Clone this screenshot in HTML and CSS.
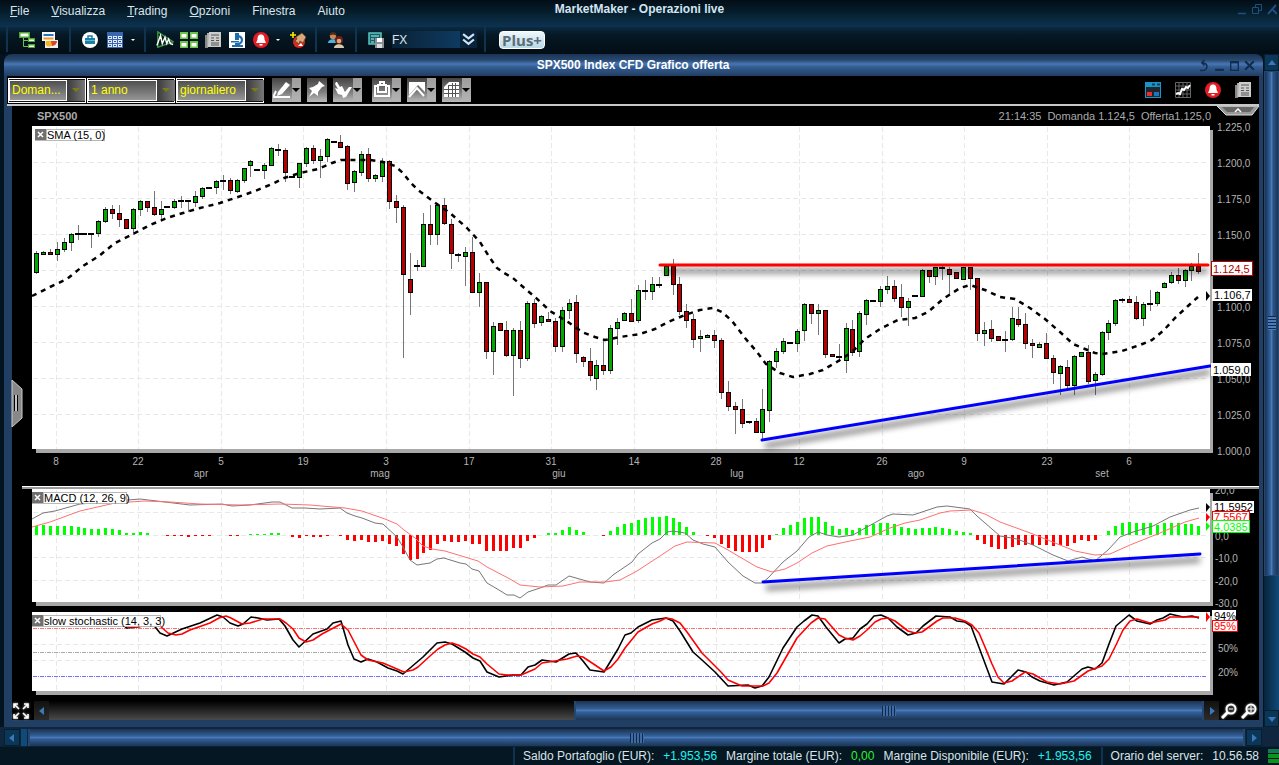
FILE: index.html
```html
<!DOCTYPE html>
<html lang="it">
<head>
<meta charset="utf-8">
<title>MarketMaker - Operazioni live</title>
<link rel="stylesheet" href="styles.css">
</head>
<body>
<header class="menubar">
  <nav class="menu">
    <a href="#"><u>F</u>ile</a><a href="#"><u>V</u>isualizza</a><a href="#"><u>T</u>rading</a><a href="#"><u>O</u>pzioni</a><a href="#">Finestra</a><a href="#">Aiuto</a>
  </nav>
  <h1 class="app-title">MarketMaker - Operazioni live</h1>
  <div class="app-controls">
    <button aria-label="Riduci"><svg width="10" height="14"><path d="M1 11.500h8" stroke="#1f4f80" stroke-width="1.500"/></svg></button>
    <button aria-label="Ripristina"><svg width="10" height="14" fill="none" stroke="#1f4f80"><path d="M3.500 5.500v-3h6v6h-3M.500 5.500h6v6h-6z"/></svg></button>
    <button aria-label="Chiudi"><svg width="10" height="14" stroke="#1f4f80" stroke-width="2"><path d="M1 12l8-9M6 8l4 4"/></svg></button>
  </div>
</header>

<div class="toolbar">
  <div class="group tight">
    <button aria-label="Albero"><svg viewBox="0 0 16 16"><path d="M4.500 6v8.500h5M4.500 8.500h5" fill="none" stroke="#6cc24a"/><path d="M0 0h11v6H0zM9 6h7v4H9zM9 12h7v4H9z" fill="#4da52f"/><path d="M1.500 1.500h8v3h-8zM10 7.500h5v1.500h-5zM10 13.500h5v1.500h-5z" fill="#fff"/></svg></button>
    <button aria-label="Prodotti"><svg viewBox="0 0 16 16"><path d="M3 8h13v8H3z" fill="#eee"/><circle cx="7" cy="11" r="3.500" fill="#f4b32a"/><path d="M9 9h6a5 5 0 0 1-5 5z" fill="#d9452b"/><path d="M0 0h13v9H0z" fill="#f4f7fb"/><path d="M1.500 2h10v2h-10z" fill="#2f6fc0"/><path d="M1.500 5.500h10v2h-10z" fill="#f29b20"/></svg></button>
  </div>
  <div class="group">
    <button aria-label="Conto"><svg viewBox="0 0 16 16"><circle cx="8" cy="8" r="8" fill="#fff"/><path d="M6 6V4h4v2" fill="none" stroke="#1b7fa8" stroke-width="1.500"/><path d="M3 6h10v6H3z" fill="#1b7fa8"/><path d="M3 8h10v1H3z" fill="#5fb7d5"/></svg></button>
    <button aria-label="Tabella"><svg viewBox="0 0 16 16"><path d="M0 0h16v16H0z" fill="#3a66b0"/><path d="M1 4h4v3H1zM6 4h4v3H6zM11 4h4v3h-4zM1 8h4v3H1zM6 8h4v3H6zM11 8h4v3h-4zM1 12h4v3H1zM6 12h4v3H6zM11 12h4v3h-4z" fill="#dde8f8"/><path d="M2 5.500h2M7 5.500h2M12 5.500h2M2 9.500h2M7 9.500h2M12 9.500h2M2 13.500h2M7 13.500h2M12 13.500h2" stroke="#2b4f90"/></svg></button>
    <button class="caret" aria-label="Altre tabelle"></button>
  </div>
  <div class="group charts">
    <button aria-label="Grafico"><svg class="big" viewBox="0 0 20 18"><path d="M2 0v17L19 11z" fill="#0a1d18" stroke="#3a9a45" stroke-width="1.500"/><path d="M1 15L5 4l2 9 3-7 2 7 2-5 2 5 3 1" fill="none" stroke="#fff" stroke-width="1.600"/></svg></button>
    <button aria-label="Riquadri"><svg class="wide" viewBox="0 0 18 16"><path d="M0 0h8v7H0zM10 0h8v7h-8zM0 9h8v7H0zM10 9h8v7h-8z" fill="#6cc24a"/><path d="M1.500 2h5v3.500h-5zM11.500 2h5v3.500h-5zM1.500 11h5v3.500h-5zM11.500 11h5v3.500h-5z" fill="#fff"/></svg></button>
    <button aria-label="Notizie"><svg viewBox="0 0 16 16"><use href="#news"/></svg></button>
    <button aria-label="Analisi"><svg viewBox="0 0 16 16"><path d="M0 0h16v16H0z" fill="#fff"/><path d="M6 1h4v7H6zM3 13h11v2H3zM2 9h8v1.500H2z" fill="#1e6da8"/><path d="M10 4c4 2 4 6 0 8H6" fill="none" stroke="#1e6da8" stroke-width="2"/></svg></button>
    <button aria-label="Avvisi"><svg viewBox="0 0 16 16"><use href="#bell"/></svg></button>
    <button class="caret" aria-label="Altri avvisi"></button>
    <button class="new-alert" aria-label="Nuovo avviso"><svg viewBox="0 0 16 16"><circle cx="9" cy="10" r="6" fill="#d42a22"/><path d="M6 5l6-4 4 4-3 6-3-2-1 3-4-3 2-2z" fill="#d8a878" stroke="#704020" stroke-width=".8"/><path d="M8 14l3-3 2 3z" fill="#fff"/><path d="M3 0v6M0 3h6" stroke="#ffe600" stroke-width="1.600"/></svg></button>
  </div>
  <div class="group">
    <button aria-label="Utenti"><svg viewBox="0 0 16 16"><circle cx="5" cy="4" r="3.200" fill="#c98a58"/><path d="M1.500 3.500a3.500 3.500 0 0 1 7 0L5 2.500z" fill="#4a2a18"/><path d="M0 11c0-5 10-5 10 0z" fill="#4db2df"/><circle cx="11" cy="8" r="4" fill="#6a2018"/><circle cx="11" cy="9" r="2.300" fill="#e2a878"/><path d="M6 16c0-5 10-5 10 0z" fill="#d8c8b0"/></svg></button>
  </div>
  <div class="group">
    <button aria-label="Salva layout"><svg viewBox="0 0 16 16"><path d="M1 1h12v11H1z" fill="#17606a" stroke="#58c8c0" stroke-width="1.500"/><path d="M3 4h8M3 7h3M3 10h3" stroke="#bdf0e8"/><path d="M7 6h9v10H7z" fill="#8a8f98"/><path d="M9 6h5v4H9z" fill="#fff"/><path d="M9 12h5v4H9z" fill="#ddd"/></svg></button>
    <label class="layout-select"><select aria-label="Layout"><option>FX</option></select><svg viewBox="0 0 12 12"><path d="M1 1l5 4 5-4M1 6l5 4 5-4" fill="none" stroke="#cfe4f5" stroke-width="2"/></svg></label>
  </div>
  <div class="group"><button class="plus">Plus+</button></div>
</div>

<main class="workspace">
  <section class="window">
    <div class="titlebar">
      <h2>SPX500 Index CFD Grafico offerta</h2>
      <div class="win-controls">
        <button aria-label="Sgancia"><svg viewBox="0 0 10 12"><path d="M1 10.500c8 1 8-7 2-7M5 1L2.500 3.500 5 6" stroke-width="1.400"/></svg></button>
        <button aria-label="Riduci"><svg viewBox="0 0 10 12"><path d="M1 10h8"/></svg></button>
        <button aria-label="Ingrandisci"><svg viewBox="0 0 10 12"><path d="M1.500 2.500h7v8h-7z" stroke-width="1.200"/><path d="M1 3h8"/></svg></button>
        <button aria-label="Chiudi"><svg viewBox="0 0 10 12"><path d="M1 2l8 8M9 2l-8 8"/></svg></button>
      </div>
    </div>

    <div class="chart-tools">
      <div class="selects">
        <label class="combo"><select aria-label="Prezzo"><option>Doman...</option></select><i></i></label>
        <label class="combo wide"><select aria-label="Periodo"><option>1 anno</option></select><i></i></label>
        <label class="combo wide"><select aria-label="Intervallo"><option>giornaliero</option></select><i></i></label>
      </div>
      <div class="draw-tools">
        <button class="tool drop" aria-label="Disegna"><svg viewBox="0 0 20 24"><path d="M14 4l4 3-8 9-5 2 1-4z" fill="#fff"/><path d="M4 13l-2 4v2h16" fill="none" stroke="#fff" stroke-width="1.800"/></svg></button>
        <button class="tool" aria-label="Fissa"><svg viewBox="0 0 20 24"><path d="M12 3l6 5-3 1-4 5v4l-4-3-5 4 3-6-3-3 4-1 5-3z" fill="#fff"/></svg></button>
        <button class="tool drop" aria-label="Seleziona"><svg viewBox="0 0 20 24"><path d="M2 6l3 5-3-1 3 6 4 1 2-5-2-4-2 1-3-5-1 0z" fill="#fff"/><path d="M8 13l2 7 3-1 6-10-3 0-4 5-2-3z" fill="#fff"/></svg></button>
        <button class="tool drop lone" aria-label="Esporta"><svg viewBox="0 0 20 24" fill="none" stroke="#fff" stroke-width="2"><path d="M6 8H3v10h14V8h-3M6 7v7h8V7zM8 7V4h4v3"/></svg></button>
        <button class="tool drop" aria-label="Indicatori"><svg viewBox="0 0 20 24"><path d="M2 4h16v10l-7-7-9 10z" fill="#fff"/><path d="M2 19l8-9 7 8" fill="none" stroke="#fff" stroke-width="2"/></svg></button>
        <button class="tool drop" aria-label="Griglia"><svg viewBox="0 0 20 24"><path d="M7 4h10v15H2V9z" fill="#fff"/><path d="M2 11.500h15M2 15.500h15M6.500 8v11M10.500 5v14M13.500 5v14M6 7.500h11" stroke="#555"/></svg></button>
      </div>
      <div class="view-tools">
        <button aria-label="Ordine"><svg viewBox="0 0 16 16"><path d="M0 0h16v16H0z" fill="#1696c8"/><path d="M1 5h14v10H1z" fill="#20242c"/><path d="M2 10h5v4H2z" fill="#e63030"/><path d="M9 10h5v4H9z" fill="#1b78b8"/><path d="M7 2.500h3M12 2.500h3" stroke="#0b3c58" stroke-width="2"/></svg></button>
        <button aria-label="Vista grafico"><svg viewBox="0 0 16 16"><path d="M.500 .500h15v15H.500zM4 0v16M8 0v16M12 0v16M0 4h16M0 8h16M0 12h16" fill="none" stroke="#666"/><path d="M1 12l2-1 2 1 2-5 2 1 2-3 2 1 2-3" fill="none" stroke="#fff" stroke-width="2"/></svg></button>
        <button aria-label="Avviso"><svg viewBox="0 0 16 16"><use href="#bell"/></svg></button>
        <button aria-label="Notizie"><svg viewBox="0 0 16 16"><use href="#news"/></svg></button>
      </div>
    </div>

    <div class="chart-body">
      <div class="quote">
        <h3>SPX500</h3>
        <p><span>21:14:35</span><span>Domanda 1.124,5</span><span>Offerta1.125,0</span></p>
        <button class="fold" aria-label="Comprimi"><svg viewBox="0 0 42 10"><path d="M0 0h42l-7 9H9z" fill="#999" stroke="#ddd"/><path d="M5 1h32l-4 5H10z" fill="#666"/><path d="M18 6l3-3 3 3" fill="none" stroke="#fff" stroke-width="1.500"/></svg></button>
      </div>
      <svg id="price" class="chart" viewBox="12 126 1247 360" role="img" aria-label="Grafico SPX500"></svg>
      <svg id="macd" class="chart" viewBox="12 486 1247 121" role="img" aria-label="MACD"></svg>
      <svg id="stoch" class="chart" viewBox="12 607 1247 94" role="img" aria-label="Stocastico lento"></svg>
      <div class="range">
        <button class="glyph" aria-label="Adatta"><svg viewBox="0 0 16 16"><path d="M1 5V1h4M11 1h4v4M15 11v4h-4M5 15H1v-4M1 1l5 5M15 1l-5 5M15 15l-5-5M1 15l5-5" fill="none" stroke="#fff" stroke-width="1.600"/></svg></button>
        <button class="step" aria-label="Indietro"><svg viewBox="0 0 8 8"><path d="M6 0v8L1 4z"/></svg></button>
        <div class="past"></div>
        <div class="thumb"><span class="grip"></span></div>
        <button class="step" aria-label="Avanti"><svg viewBox="0 0 8 8"><path d="M2 0v8l5-4z"/></svg></button>
        <button class="glyph" aria-label="Riduci zoom"><svg viewBox="0 0 16 16" fill="none" stroke="#fff"><path d="M1 15l6-6" stroke-width="3"/><circle cx="10" cy="6" r="4.500" stroke-width="2"/><path d="M8 6h4"/></svg></button>
        <button class="glyph" aria-label="Aumenta zoom"><svg viewBox="0 0 16 16" fill="none" stroke="#fff"><path d="M1 15l6-6" stroke-width="3"/><circle cx="10" cy="6" r="4.500" stroke-width="2"/><path d="M7 6h6M10 3v6"/></svg></button>
      </div>
    </div>
  </section>

  <div class="vscroll">
    <button aria-label="Su"><svg viewBox="0 0 8 8"><path d="M0 6h8L4 1z"/></svg></button>
    <div class="vthumb"><span class="grip"></span></div>
    <div class="vtrack"></div>
    <button aria-label="Giù"><svg viewBox="0 0 8 8"><path d="M0 2h8L4 7z"/></svg></button>
  </div>
</main>

<div class="hscroll">
  <button aria-label="Sinistra"><svg viewBox="0 0 8 8"><path d="M6 0v8L1 4z"/></svg></button>
  <div class="htrack"></div>
  <div class="thumb"><span class="grip"></span></div>
  <button aria-label="Destra"><svg viewBox="0 0 8 8"><path d="M2 0v8l5-4z"/></svg></button>
</div>

<footer class="status">
  <p><span>Saldo Portafoglio (EUR):</span><b class="cyan">+1.953,56</b><span>Margine totale (EUR):</span><b class="green">0,00</b><span>Margine Disponibile (EUR):</span><b class="cyan">+1.953,56</b></p>
  <p><span>Orario del server:</span><span>10.56.58</span></p>
  <div class="signal"><i></i><i></i><i></i></div>
</footer>

<svg class="defs" aria-hidden="true">
  <defs>
    <g id="bell"><circle cx="8" cy="8" r="8" fill="#e31b23"/><path d="M8 2.500c3 0 3.500 2.500 3.500 5L13 11H3l1.500-3.500c0-2.500.5-5 3.500-5zM6.500 12h3v1.500h-3z" fill="#fff"/></g>
    <g id="news"><path d="M0 3h3v13H0z" fill="#888"/><path d="M2 1h3v14H2z" fill="#aaa"/><path d="M4 0h12v15H3z" fill="#ccc"/><path d="M6 3h8M6 6h3M6 8.500h3M6 11h8M11 6h3M11 8.500h3M6 13h8" stroke="#555"/></g>
  </defs>
</svg>
<script src="charts.js"></script>
</body>
</html>
```
FILE: styles.css
```css
* { box-sizing: border-box; }
body {
  margin: 0; min-height: 100vh; display: flex; flex-direction: column;
  background: #03131f; color: #dce3e8;
  font: 12px/16px "Liberation Sans", Arial, sans-serif;
}
h1, h2, h3, p { margin: 0; font-size: 12px; }
a { color: inherit; text-decoration: none; }
button, select { font: inherit; color: inherit; border: 0; padding: 0; margin: 0; background: none; appearance: none; }
button { display: flex; align-items: center; justify-content: center; }
.defs { position: absolute; width: 0; height: 0; }

.menubar {
  height: 27px; display: grid; grid-template-columns: 1fr auto 1fr;
  background: linear-gradient(#020d16, #06202f 50%, #0d3352);
}
.menu { display: flex; gap: 22px; padding: 3px 0 0 10px; }
.app-title { padding-top: 1px; color: #d3e4f2; }
.app-controls { display: flex; justify-content: flex-end; align-items: flex-start; gap: 5px; padding: 2px 2px 0 0; }

.toolbar {
  height: 27px; padding-left: 6px; display: grid;
  grid-template-columns: 63px 75px 171px 40px 129px auto;
  background: linear-gradient(#0a2a42, #051824 30%, #020d15);
}
.group { display: flex; align-items: center; gap: 7px; padding-left: 10px; border-left: 2px solid #0f3350; height: 25px; }
.tight { gap: 5px; }
.charts { gap: 6px; }
.group button { width: 18px; height: 18px; }
.group button svg { width: 16px; height: 16px; }
.group button .wide { width: 18px; }
.group button .big { width: 20px; height: 18px; }
.group .caret { width: 4px; }
.group .new-alert { margin-left: 3px; }
.caret::before { content: ""; border: 2px solid transparent; border-top-color: #fff; border-bottom: 0; }
.layout-select { display: flex; align-items: center; height: 17px; }
.layout-select select { width: 68px; height: 17px; background: linear-gradient(90deg, #0a2236, #0e3a60); }
.layout-select svg { width: 17px; height: 17px; padding: 2px; background: #08233b; }
.group .plus {
  width: 46px; height: 18px; margin-left: 3px; border-radius: 4px; border: 1px solid #fff;
  background: linear-gradient(#eef6fa, #b8d8e4); color: #5c6c76;
  font: bold 15px/16px "Open Sans", sans-serif;
}

.workspace { display: grid; grid-template-columns: minmax(0, 1fr) 16px; padding-left: 4px; }
.window {
  padding: 0 4px 7px 3px; border-radius: 8px 8px 0 0;
  background: linear-gradient(#1b3454, #28486f 6px, #4877b4 10px, #335d92 13px, #213e63 22px);
}
.titlebar { height: 22px; display: grid; grid-template-columns: 1fr auto 1fr; align-items: center; color: #fff; }
.titlebar h2 { grid-column: 2; }
.win-controls { display: flex; gap: 4px; justify-content: flex-end; padding-right: 4px; }
.win-controls svg { width: 11px; height: 13px; fill: none; stroke: #122c4c; stroke-width: 2; }

.chart-tools { display: flex; align-items: center; height: 30px; background: #000; border-bottom: 2px solid #c8c8c8; padding: 0 8px 0 1px; }
.selects { display: flex; gap: 1px; }
.combo {
  display: grid; grid-template-columns: 58px 18px; height: 25px; width: 78px;
  border: 1px solid #fff; padding: 1px 0; background: #111;
}
.combo.wide { grid-template-columns: 69px 18px; width: 88px; }
.combo select {
  padding-left: 2px; color: #ff0; border: 1px solid #fff;
  background: linear-gradient(#505050, #959595); border-radius: 0; overflow: hidden;
}
.combo i { background: linear-gradient(90deg, #3a3a3a, #777); display: flex; align-items: center; justify-content: center; }
.combo i::before { content: ""; border: 4px solid transparent; border-top-color: #7c7c10; border-bottom: 0; }
.draw-tools { display: flex; gap: 6px; padding-left: 8px; }
.tool { height: 24px; background: linear-gradient(#444, #808080 60%, #bbb); }
.tool svg { width: 20px; height: 24px; }
.tool.drop { background: linear-gradient(#9c9c9c, #b4b4b4) right / 9px 100% no-repeat, linear-gradient(#444, #808080 60%, #bbb); }
.tool.drop::after { content: ""; margin-right: 1px; border: 4px solid transparent; border-top-color: #000; border-bottom: 0; }
.tool.lone { margin-left: 4px; }
.view-tools { display: flex; gap: 14px; margin-left: auto; }
.view-tools svg { width: 16px; height: 16px; display: block; }

.chart-body { background: #000; margin-left: 5px; }
.quote { position: relative; display: flex; justify-content: space-between; height: 20px; font-size: 11px; line-height: 20px; color: #aaa; padding: 0 48px 0 25px; }
.quote h3 { font-size: 11px; }
.quote p { display: flex; gap: 6px; font-size: 11px; }
.fold { position: absolute; right: 0; top: 0; }
.fold svg { width: 42px; height: 10px; }

.chart { display: block; width: 100%; height: auto; overflow: visible; }
.paper { fill: #fff; }
.shade { fill: #a8a8a8; }
.grid { fill: none; stroke: #e8e8e8; stroke-dasharray: 5 3; shape-rendering: crispEdges; }
.ink { fill: none; shape-rendering: geometricPrecision; stroke-linejoin: round; }
.crisp { shape-rendering: crispEdges; }
.axis { fill: #b4b4b4; font-size: 10px; }
.tag { font-size: 11px; }
.mid { text-anchor: middle; }

.range { display: flex; height: 19px; }
.range .step { width: 15px; background: linear-gradient(#111, #2b2b2b); }
.glyph { width: 20px; }
.glyph svg { width: 16px; height: 16px; filter: drop-shadow(0 0 1px #aaa); }
.range .glyph:first-child { width: 22px; padding-right: 4px; }
.past { flex: 526; background: linear-gradient(#000, #4a4a4a); }
.range .thumb { flex: 627; }
.step svg, .vscroll svg, .hscroll svg { width: 8px; height: 8px; fill: #3a78b8; }
.thumb {
  display: flex; align-items: center; justify-content: center;
  background: linear-gradient(#1a3350, #34609a 42%, #4a7cbc 50%, #335f98 58%, #1b3553);
  border: 1px solid #24466f; border-width: 0 2px;
}
.grip { width: 14px; height: 10px; background: repeating-linear-gradient(90deg, #122a48 0 1px, #3d6aa4 1px 3px); }

.vscroll { display: flex; flex-direction: column; background: #03131f; padding-left: 1px; }
.vscroll button { height: 17px; background: #0b3658; border: 1px solid #06202f; }
.vthumb {
  flex: 506; display: flex; align-items: center; justify-content: center;
  background: linear-gradient(90deg, #1a3350, #34609a 40%, #4a7cbc 50%, #2c5588 62%, #1b3553);
  border: 1px solid #24466f;
}
.vthumb .grip { width: 8px; height: 14px; background: repeating-linear-gradient(#122a48 0 1px, #4a7cbc 1px 3px); }
.vtrack { flex: 135; background: linear-gradient(90deg, #07243b, #0f4a78); }

.hscroll { display: flex; height: 19px; padding: 2px 17px 0 4px; background: #10263f; gap: 1px; }
.hscroll button { width: 16px; background: #0b3658; border: 1px solid #06202f; }
.htrack { width: 6px; background: #0f4a78; }
.hscroll .thumb { flex: 1; }

.status { display: flex; justify-content: flex-end; height: 19px; gap: 3px; border-top: 1px solid #0a2233; background: #051722; }
.status p { display: flex; gap: 9px; padding: 1px 6px 0 8px; border-left: 2px solid #0f3350; }
.status b { font-weight: normal; }
.cyan { color: #1df2f2; }
.green { color: #2df22d; }
.signal { width: 11px; display: flex; flex-direction: column; gap: 1px; padding-top: 2px; }
.signal i { height: 4px; background: #0c9420; }
.signal i:first-child { background: #117a55; }
```
FILE: charts.js
```js
// Candles: colour (g rise, r fall, d flat), body top, body bottom, high, low.
const candles = `g253,273,251,274 g252,255,251,255 r252,255,249,255 g249,255,242,261 g242,250,238,252 g234,243,233,251 d234,234,225,240
d234,234,234,234 d234,234,234,248 g221,234,220,237 g209,222,207,223 r209,214,205,219 r213,220,205,227 r219,229,219,229 g209,229,208,235
g201,210,200,216 r201,208,201,212 r207,215,191,216 g209,215,201,220 d207,207,207,207 g201,208,199,209 d201,201,196,208 d201,201,201,212
g196,203,191,207 g188,197,187,199 d188,188,188,188 g181,188,180,194 d181,181,175,190 r180,191,178,194 g180,192,179,193 g168,181,168,183
g161,166,160,177 d170,170,170,170 g165,171,163,179 g148,166,147,166 d150,150,144,156 r150,173,148,182 d177,177,176,177 g163,178,163,188
g148,164,147,167 r148,161,145,164 g156,161,149,178 g139,157,138,162 d142,142,142,142 r142,148,135,148 r146,184,145,190 g171,183,170,192
g154,173,151,176 r154,179,148,182 g175,179,174,182 g161,177,158,182 r161,202,160,209 r201,208,195,223 r207,275,205,358 r279,293,253,315
d266,266,260,271 g224,267,213,267 r224,235,205,245 g205,235,203,245 r205,224,198,225 r224,254,219,269 d255,255,253,262 g252,257,247,286
r252,293,237,293 g282,293,273,307 r282,352,282,359 g326,352,322,375 r323,331,323,331 r330,356,321,357 g330,356,328,396 r330,359,321,368
g303,359,301,361 r303,324,299,328 g316,323,315,326 r319,322,312,322 r321,347,318,352 g310,347,307,352 g303,311,299,319 r302,354,295,363
r357,362,356,367 r361,376,348,381 g365,379,360,390 r365,371,340,375 g328,371,325,374 g322,329,318,345 g313,321,312,321 r313,322,299,322
g290,321,285,323 d291,291,280,300 g284,292,277,300 d285,285,277,288 g266,276,266,276 r266,285,259,295 r284,312,277,315 r311,321,304,328
r319,340,314,348 g336,339,330,352 g335,338,334,338 r335,341,330,348 r340,393,338,399 r392,407,381,411 r406,410,402,434 r409,424,399,428
d422,422,422,424 r421,433,418,433 g409,433,389,440 g361,411,360,422 g351,362,348,368 g341,352,338,354 d343,343,343,343 g331,344,329,352
g304,331,303,341 r304,314,304,324 g310,314,304,335 r310,355,310,358 r354,357,354,357 d357,357,344,362 g328,361,323,373 r329,353,320,356
g313,352,311,357 g300,315,299,325 d301,301,301,301 g289,302,286,307 g286,290,276,294 r286,299,280,302 r297,308,284,317 g301,308,298,326
d296,296,296,296 g270,297,269,297 r270,277,270,283 g267,277,267,285 d268,268,266,280 r269,275,267,296 r272,279,272,279 g267,280,267,280
r267,279,267,290 r278,334,278,341 g330,334,322,346 r329,339,320,342 r336,341,336,341 d340,340,331,352 g318,340,307,341 r319,325,307,327
r324,344,313,349 r343,346,339,358 g344,348,342,348 r343,359,333,359 r358,373,355,384 g366,374,365,395 r367,386,360,388 g356,386,355,395
g352,357,352,357 r352,382,345,384 g374,381,372,395 g332,375,331,376 g323,333,320,340 g300,324,299,326 d300,300,298,303 r299,303,296,303
r302,319,296,320 g304,319,302,326 d304,304,290,311 g292,304,291,306 g283,288,282,288 g275,283,272,284 r275,281,268,284 g270,281,269,287
g266,271,263,281 r266,272,253,274`.split(/\s+/);

const histogram = [9,10,9,9,9,9,8,7,6,6,7,6,5,2,2,3,2,0,0,-1,-1,-1,-2,-1,-1,-1,0,0,-1,-1,0,1,1,1,2,2,0,-2,-3,-1,-2,-2,-1,0,-1,-5,-6,-5,-7,-7,-6,-9,-11,-19,-25,-24,-18,-15,-9,-6,-7,-7,-6,-9,-9,-16,-16,-16,-16,-13,-13,-6,-3,0,2,2,5,8,5,3,0,0,-1,4,8,11,12,15,17,18,18,19,17,13,8,3,0,-1,-3,-9,-13,-16,-17,-17,-17,-13,-5,1,7,10,13,17,18,18,13,9,6,7,5,7,10,11,12,12,11,8,7,6,7,7,8,7,6,4,3,2,-5,-9,-12,-14,-14,-12,-10,-10,-10,-10,-10,-11,-10,-11,-8,-5,-6,-5,0,4,9,12,13,12,12,12,10,12,12,12,11,11,9];

const sma = "32,296 50,287 67,279 83,266 99,256 115,243 133,234 150,225 167,218 183,213 200,208 220,203 238,197 255,191 272,184 284,178 300,173 318,169 332,163 341,160 370,160 383,162 395,166 403,173 410,182 418,190 434,202 450,213 467,228 480,242 490,258 497,268 504,273 513,278 522,286 535,297 550,311 568,322 582,332 595,337 605,340 620,337 640,334 655,329 668,322 685,315 700,310 713,308 722,312 732,321 745,338 757,352 766,364 780,373 793,377 810,374 823,370 840,360 852,352 865,339 880,329 898,320 915,318 928,312 943,299 960,288 970,285 985,290 1000,297 1015,299 1030,308 1045,319 1060,332 1073,344 1085,349 1095,353 1102,354 1122,351 1140,345 1152,340 1163,331 1175,318 1188,306 1198,297";
const macdLine = "32,519 43,513 55,511 80,504 105,502 140,499 165,502 190,505 222,504 232,506 250,505 272,502 280,502 292,508 305,508 320,509 340,508 347,513 355,516 362,518 375,523 383,524 397,537 403,547 410,560 417,565 430,563 437,559 444,558 460,563 466,564 472,569 479,571 487,583 499,590 507,595 514,595 520,598 528,592 540,588 548,585 556,585 569,576 590,582 604,583 613,575 632,562 638,554 652,543 660,539 667,532 673,531 685,533 693,540 703,544 715,547 728,562 743,576 755,583 762,583 768,578 783,562 797,551 809,537 818,532 827,535 839,537 853,535 867,527 887,516 893,514 913,515 937,507 947,506 970,509 977,516 1000,536 1017,539 1033,545 1053,555 1068,561 1082,557 1095,561 1108,550 1120,537 1133,532 1153,526 1170,517 1190,510 1199,508";
const macdSignal = "32,527 50,522 80,511 115,503 145,501 170,502 200,504 240,505 280,504 310,505 345,508 362,511 385,519 397,524 404,530 415,538 423,546 432,549 445,551 478,561 487,567 510,579 520,585 540,587 563,586 580,582 605,582 620,580 637,571 660,556 675,546 687,542 715,543 728,550 745,560 757,567 772,572 785,569 797,563 812,553 827,546 850,541 870,537 890,528 905,523 920,520 940,513 950,511 972,510 985,514 1000,522 1033,534 1060,545 1075,551 1095,555 1110,554 1130,545 1160,533 1185,522 1199,518";
const slowK = "120,618 123,625 127,628 137,627 152,623 160,633 167,636 182,629 200,623 217,615 223,617 230,623 238,626 243,624 251,617 258,618 267,620 279,619 285,626 293,640 299,647 313,634 327,629 333,623 341,621 348,645 354,659 361,662 368,659 377,662 388,668 397,671 403,674 423,657 437,643 445,642 452,644 465,652 473,658 480,661 487,672 499,677 513,675 521,675 528,667 535,665 542,660 556,662 569,654 576,653 583,661 590,670 604,672 618,649 625,635 631,633 638,627 652,620 666,618 673,621 680,631 693,652 702,660 715,672 728,686 748,685 755,688 762,686 769,677 783,648 797,627 804,621 812,615 818,616 826,627 839,643 845,639 853,638 860,629 867,624 874,616 881,615 888,618 897,627 908,635 916,633 923,626 936,616 950,617 957,621 965,622 971,626 992,682 1004,684 1018,670 1026,672 1032,677 1040,681 1054,685 1067,682 1082,669 1088,667 1095,669 1102,663 1109,644 1116,626 1129,615 1137,621 1150,624 1157,620 1163,618 1170,614 1183,617 1192,616 1199,618";
const slowD = "127,627 139,627 152,623 160,626 168,633 176,635 182,634 190,630 210,623 219,618 226,616 231,618 242,624 250,623 263,619 280,619 286,623 293,629 299,638 306,642 313,640 322,634 341,624 348,630 361,655 368,660 383,663 397,669 404,672 413,670 418,667 430,656 438,649 445,645 452,643 458,645 466,649 473,654 480,657 487,664 499,674 507,675 521,675 535,669 542,663 555,661 567,659 577,656 583,657 604,671 611,667 618,659 625,648 638,632 645,628 652,624 660,621 666,618 672,619 680,623 687,632 702,653 709,660 721,672 728,680 742,686 763,686 769,683 777,673 797,638 811,623 818,618 825,619 839,635 845,638 853,640 860,636 867,630 875,622 881,619 888,618 895,621 908,631 915,633 922,632 929,627 937,621 943,618 955,618 965,621 972,625 979,633 985,647 992,664 998,677 1004,683 1012,681 1025,672 1033,674 1047,682 1060,684 1074,681 1088,671 1102,666 1109,659 1116,645 1123,630 1130,621 1137,619 1150,623 1165,620 1170,617 1192,617 1199,617";

const weeks = [[56, 8], [138, 22], [221, 5], [303, 19], [386, 3], [469, 17], [551, 31], [634, 14], [716, 28], [799, 12], [882, 26], [964, 9], [1047, 23], [1129, 6]];
const months = [[201, "apr"], [380, "mag"], [559, "giu"], [737, "lug"], [916, "ago"], [1102, "set"]];

const barX = i => Math.round(36 + i * 6.919);
const rect = (x, y, w, h, fill) => `<rect class="crisp" x="${x}" y="${y}" width="${w}" height="${h}" fill="${fill}"/>`;
const line = (pts, color, width, extra = "") => `<polyline class="ink" points="${pts}" stroke="${color}" stroke-width="${width}" ${extra}/>`;
const text = (x, y, s, cls = "axis", fill = "") => `<text x="${x}" y="${y}" class="${cls}" ${fill && `style="fill:${fill}"`}>${s}</text>`;

function paper(top, bottom, rows) {
  const h = rows.map(y => `M33 ${y}.5H1208`).join("");
  const v = weeks.map(([x]) => `M${x}.5 ${top + 1}V${bottom}`).join("");
  return `<rect class="shade" x="36" y="${top + 4}" width="1177" height="${bottom - top}"/>` +
    `<rect class="paper" x="32" y="${top}" width="1178" height="${bottom - top}"/><path class="grid" d="${h}${v}"/>`;
}
function legend(x, y, w, label) {
  return rect(x, y, w, 12, "#b8b8b8") + rect(x + 12, y + 1, w - 13, 10, "#fff") + rect(x, y, 11, 11, "#707070") +
    `<path d="M${x + 3} ${y + 3}l5 5m0-5l-5 5" stroke="#fff" stroke-width="1.5"/>` + text(x + 12, y + 10, label, "tag", "#000");
}
function tag(x, y, w, h, label, color, border) {
  return rect(x, y, w, h, border) + rect(x + 1, y + 1, w - 2, h - 2, "#fff") + text(x + 2, y + h / 2 + 4, label, "tag", color);
}
function trend(x1, y1, x2, y2, color) {
  return `<path d="M${x1 + 3} ${y1 + 6}L${x2} ${y2 + 6}" stroke="#000" stroke-opacity=".5" stroke-width="5" style="filter:blur(3px)"/>` +
    `<path d="M${x1} ${y1}L${x2} ${y2}" stroke="${color}" stroke-width="3" stroke-linecap="round"/>`;
}

let p = paper(126, 449, [162, 198, 234, 270, 306, 342, 378, 414]);
candles.forEach((c, i) => {
  const [top, bottom, high, low] = c.slice(1).split(",").map(Number);
  const x = barX(i);
  p += rect(x, high, 1, low - high, "#777");
  if (c[0] === "d") p += rect(x - 3, top - 1, 6, 2, "#000");
  else p += rect(x - 2, top, 5, bottom - top, "#000") + rect(x - 1, top + 1, 3, Math.max(1, bottom - top - 2), c[0] === "g" ? "#00a800" : "#b40000");
});
p += line(sma, "#000", 2.5, 'stroke-dasharray="5 5"');
p += trend(660, 265, 1208, 265, "#f00") + trend(762, 440, 1210, 366, "#00f");
p += legend(35, 129, 70, "SMA (15, 0)");
["1.225,0", "1.200,0", "1.175,0", "1.150,0", "", "1.100,0", "1.075,0", "1.050,0", "1.025,0", "1.000,0"].forEach((s, i) => { p += text(1217, 131 + i * 36, s); });
p += tag(1211, 261, 42, 15, "1.124,5", "#b40000", "#c00000") + tag(1212, 289, 40, 12, "1.106,7", "#000", "#fff") + tag(1211, 363, 40, 13, "1.059,0", "#000", "#fff");
p += '<path d="M1206 291v10l4-5z"/>';
weeks.forEach(([x, s]) => { p += text(x, 465, s, "axis mid"); });
months.forEach(([x, s]) => { p += text(x, 477, s, "axis mid"); });
p += '<path d="M12 380l10 9v29l-10 9z" fill="#888" stroke="#ccc"/><path d="M14.500 395v16M17.500 395v16" stroke="#000"/><path d="M16 395v16" stroke="#fff"/>';
document.getElementById("price").innerHTML = p;

let m = paper(489, 602, [512, 535, 557, 580]);
histogram.forEach((v, i) => { if (v) m += rect(barX(i) - 1, v > 0 ? 535 - v : 535, 3, Math.abs(v), v > 0 ? "#0f0" : "#f00"); });
m += line(macdLine, "#777", 1) + line(macdSignal, "#ff7070", 1) + trend(763, 582, 1200, 554, "#00f") + legend(32, 492, 95, "MACD (12, 26, 9)");
m += text(1215, 494, "20,0") + text(1215, 540, "0,0") + text(1215, 562, "-10,0") + text(1215, 585, "-20,0") + text(1215, 607, "-30,0");
m += rect(22, 486, 1237, 1, "#fff") + rect(22, 487, 1237, 2, "#999");
m += tag(1212, 501, 42, 12, "11,5952", "#000", "#fff") + tag(1212, 511, 38, 12, "7,5567", "#f00", "#f00") + tag(1212, 520, 38, 13, "4,0385", "#0f0", "#0f0");
m += '<path d="M1206 503v9l4-5z"/><path d="M1206 513v9l4-5z" fill="red"/><path d="M1206 522v9l4-5z" fill="lime"/>';
document.getElementById("macd").innerHTML = m;

let s = paper(612, 691, [644, 660]);
[[628, "#ff7070"], [652, "#aaa"], [676, "#7070ff"]].forEach(([y, c]) => { s += `<path class="crisp" d="M33 ${y}.5H1206" stroke="${c}" stroke-dasharray="4 1 1 1"/>`; });
s += line(slowK, "#000", 1.6) + line(slowD, "#f00", 1.6) + legend(32, 615, 129, "slow stochastic (14, 3, 3)");
s += text(1218, 629, "80%") + text(1218, 652, "50%") + text(1218, 676, "20%");
s += tag(1212, 610, 24, 12, "94%", "#000", "#fff") + tag(1212, 620, 26, 12, "95%", "#f00", "#f00") + '<path d="M1206 612v10l4-5z" fill="red"/>';
document.getElementById("stoch").innerHTML = s;
```
